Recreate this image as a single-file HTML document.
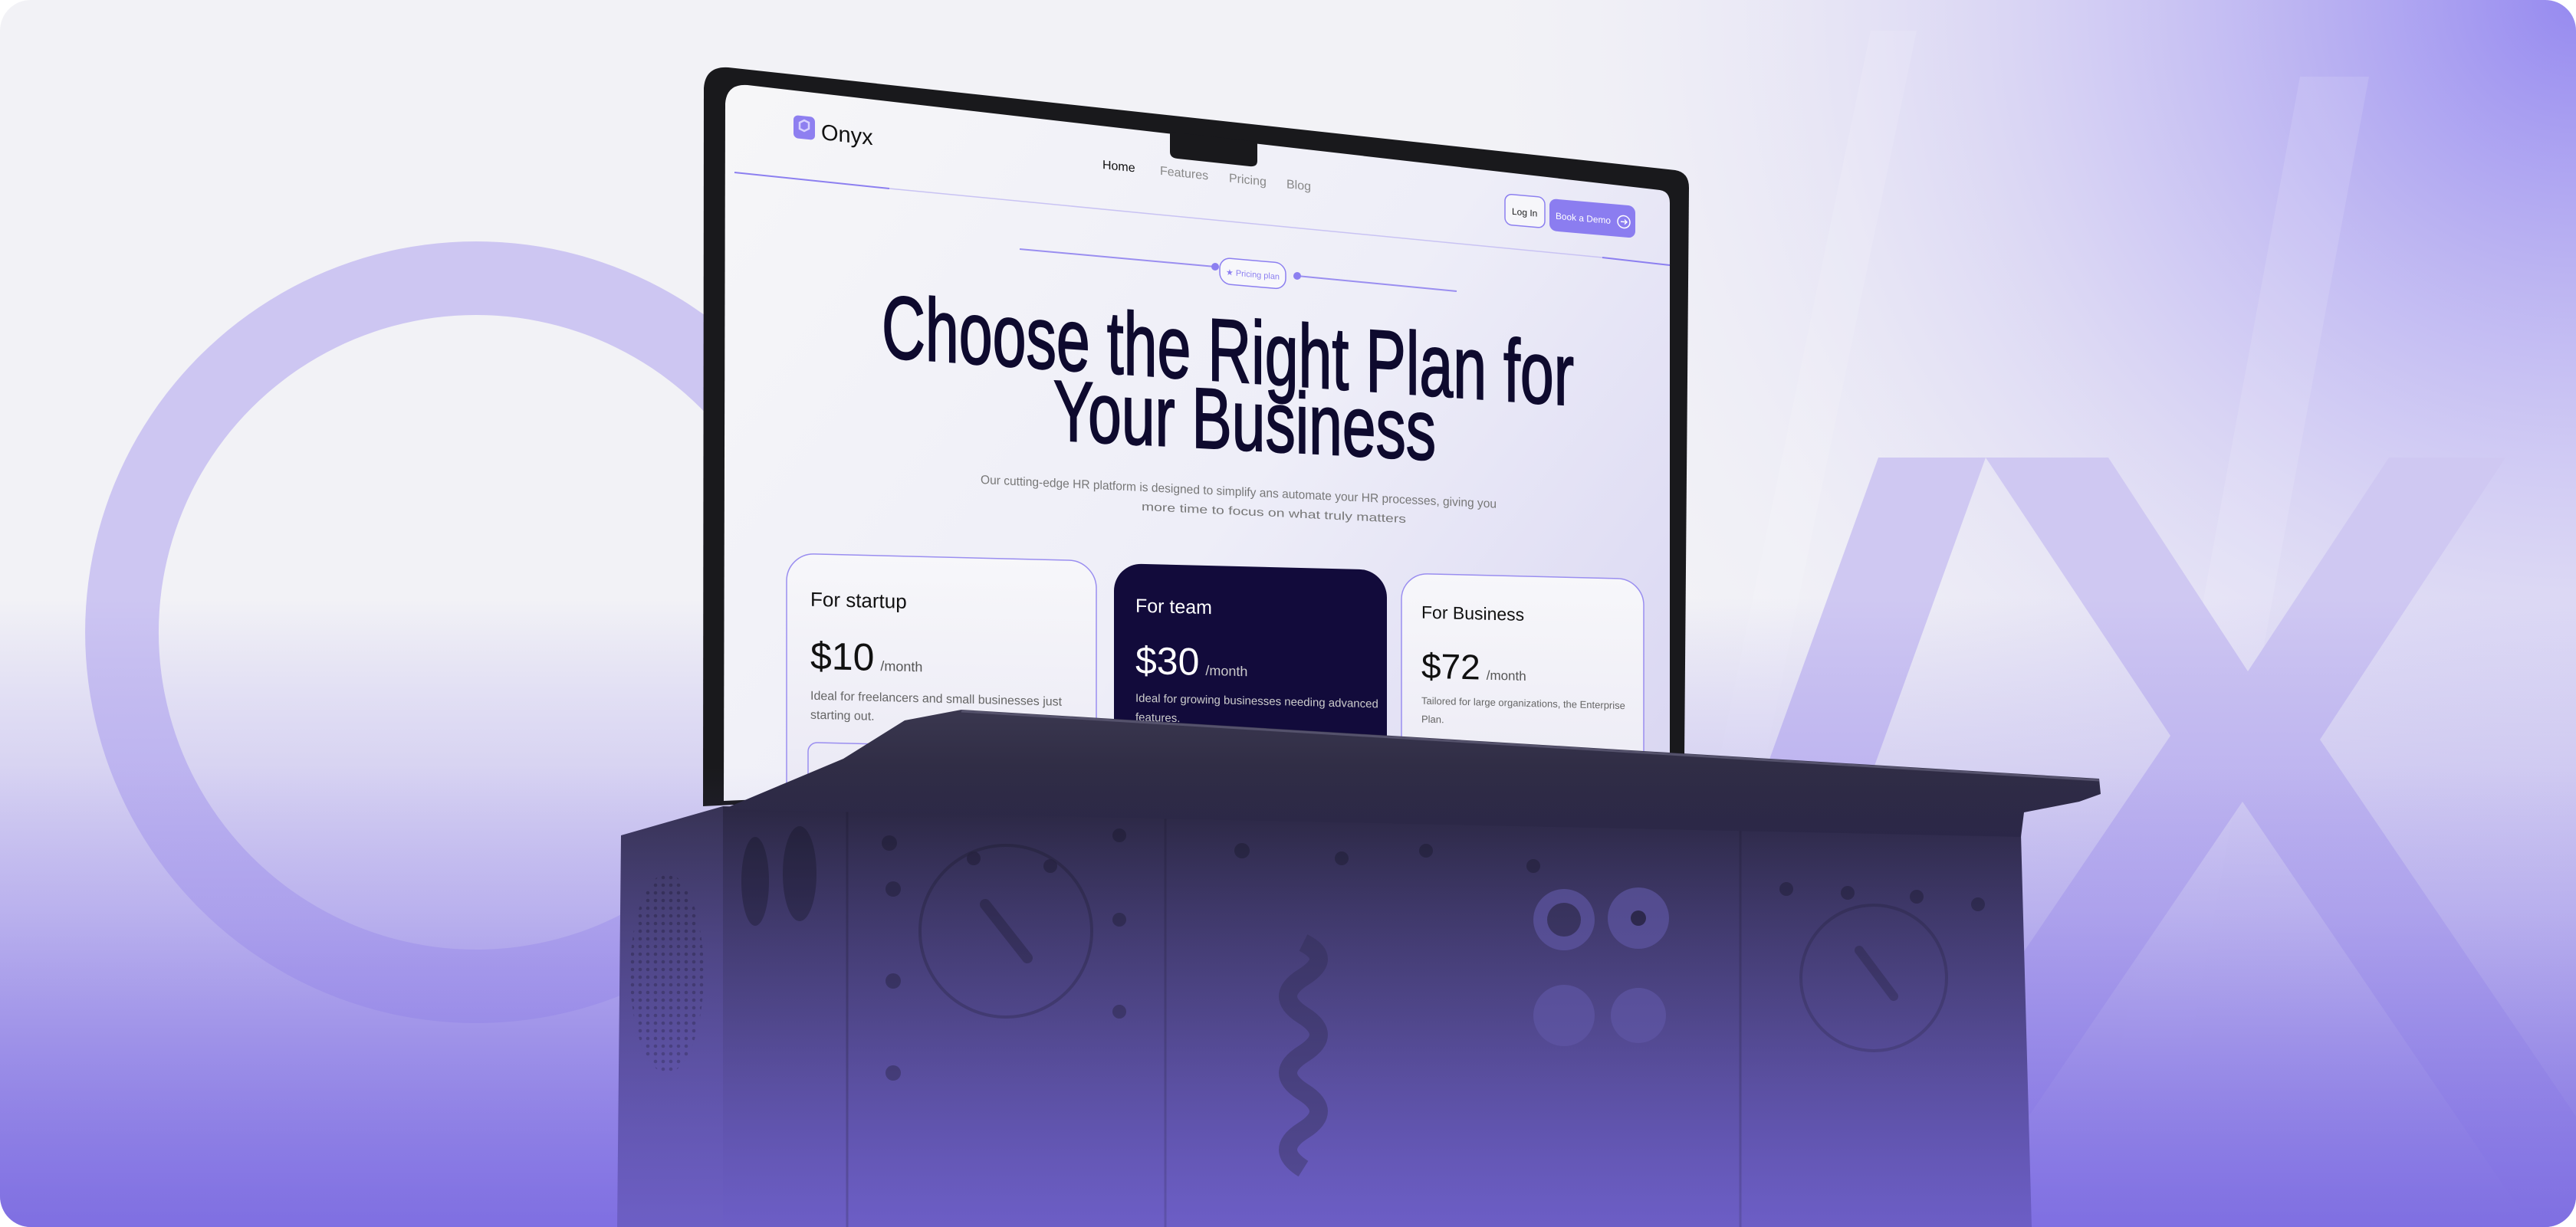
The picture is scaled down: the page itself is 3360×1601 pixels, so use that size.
<!DOCTYPE html>
<html><head><meta charset="utf-8"><style>
html,body{margin:0;padding:0;background:#fff;width:3360px;height:1601px;overflow:hidden}
svg{display:block}
text{font-family:"Liberation Sans",sans-serif}
</style></head><body>
<svg width="3360" height="1601" viewBox="0 0 3360 1601" xmlns="http://www.w3.org/2000/svg">
<defs>
<clipPath id="pg"><rect x="0" y="0" width="3360" height="1601" rx="40"/></clipPath>
<radialGradient id="tr" cx="3360" cy="0" r="1500" gradientUnits="userSpaceOnUse">
<stop offset="0" stop-color="#968af0"/><stop offset="0.45" stop-color="#c9c2f3" stop-opacity="0.7"/><stop offset="1" stop-color="#f2f2f6" stop-opacity="0"/></radialGradient>
<linearGradient id="bot" x1="0" y1="780" x2="0" y2="1601" gradientUnits="userSpaceOnUse">
<stop offset="0" stop-color="#8a7be6" stop-opacity="0"/><stop offset="0.5" stop-color="#a497ec" stop-opacity="0.55"/><stop offset="1" stop-color="#8474e4" stop-opacity="1"/></linearGradient>
<linearGradient id="bot2" x1="0" y1="1000" x2="0" y2="1601" gradientUnits="userSpaceOnUse">
<stop offset="0" stop-color="#7b6be0" stop-opacity="0"/><stop offset="1" stop-color="#7b6be0" stop-opacity="0.55"/></linearGradient>
<linearGradient id="scr" x1="958" y1="112" x2="2178" y2="1040" gradientUnits="userSpaceOnUse">
<stop offset="0" stop-color="#f6f6f8"/><stop offset="0.55" stop-color="#eeeef8"/><stop offset="1" stop-color="#d9d6f2"/></linearGradient>
<linearGradient id="card" x1="0" y1="0" x2="0" y2="1"><stop offset="0" stop-color="#f7f7fa"/><stop offset="1" stop-color="#e6e4f3"/></linearGradient>
<linearGradient id="box" x1="0" y1="1050" x2="0" y2="1601" gradientUnits="userSpaceOnUse">
<stop offset="0" stop-color="#27243b"/><stop offset="0.5" stop-color="#3d3766"/><stop offset="1" stop-color="#5a4ea6"/></linearGradient>
<linearGradient id="boxl" x1="0" y1="1050" x2="0" y2="1601" gradientUnits="userSpaceOnUse">
<stop offset="0" stop-color="#34304e"/><stop offset="1" stop-color="#5b50a4"/></linearGradient>
<linearGradient id="lid" x1="0" y1="926" x2="0" y2="1090" gradientUnits="userSpaceOnUse">
<stop offset="0" stop-color="#3a374f"/><stop offset="1" stop-color="#24213a"/></linearGradient>
<pattern id="dots" width="10" height="10" patternUnits="userSpaceOnUse"><circle cx="5" cy="5" r="2.3" fill="#1e1b30" opacity="0.6"/></pattern>
</defs>
<g clip-path="url(#pg)">
<rect width="3360" height="1601" fill="#f2f2f6"/>
<rect width="3360" height="1601" fill="url(#tr)"/>
<polygon points="2440,40 2500,40 2280,1100 2220,1100" fill="#ffffff" opacity="0.12"/>
<polygon points="3000,100 3090,100 2850,1400 2760,1400" fill="#ffffff" opacity="0.12"/>
<!-- O ring -->
<path d="M621,315 a510,510 0 1,0 0.1,0 Z M621,411 a414,414 0 1,1 -0.1,0 Z" fill="#cdc6f2" fill-rule="evenodd"/>
<polygon points="2450,597 2590,597 2228,1601 2088,1601" fill="#cfc8f2"/>
<polygon points="2590,597 2750,597 2932,876 3116,597 3268,597 3026,965 3458,1601 3302,1601 2925,1046 2548,1601 2396,1601 2831,960" fill="#cfc8f2"/>
<rect width="3360" height="1601" fill="url(#bot)"/>

<!-- laptop bezel -->
<path d="M950,88 L2185,222 Q2203,225 2203,245 L2197,990 L917,1052 L918,115 Q920,86 950,88 Z" fill="#19191c"/>
<path d="M975,111 L2165,248 Q2178,250 2178,265 L2178,992 L944,1045 L946,135 Q948,109 975,111 Z" fill="url(#scr)"/>
<path d="M1526,172 L1640,185 L1640,210 Q1640,218 1630,217 L1536,207 Q1526,206 1526,198 Z" fill="#19191c"/>
<!-- logo -->
<rect x="1035" y="150" width="28" height="30" rx="6" fill="#8e7ff0" transform="skewY(6)" transform-origin="1035 150"/>
<path d="M1043,160 l6,-3 6,3 0,8 -6,3 -6,-3Z" fill="none" stroke="#d8d2ff" stroke-width="2.5"/>
<text x="1071" y="182" font-size="29" fill="#111" transform="skewY(6)" transform-origin="1071 182">Onyx</text>
<g font-size="16" transform="skewY(6)" transform-origin="1438 220">
<text x="1438" y="220" fill="#111">Home</text>
<text x="1513" y="220" fill="#888">Features</text>
<text x="1603" y="220" fill="#888">Pricing</text>
<text x="1678" y="220" fill="#888">Blog</text>
</g>
<line x1="958" y1="225" x2="1160" y2="246" stroke="#8c7ff0" stroke-width="2"/>
<line x1="1160" y1="246" x2="2090" y2="336" stroke="#c9c3f3" stroke-width="1.5"/>
<line x1="2090" y1="336" x2="2178" y2="346" stroke="#8c7ff0" stroke-width="2"/>
<g transform="skewY(5)" transform-origin="1963 253">
<rect x="1963" y="253" width="52" height="40" rx="9" fill="#f6f6fa" stroke="#8c7ff0" stroke-width="1.5"/>
<text x="1972" y="279" font-size="12" fill="#222">Log In</text>
</g>
<g transform="skewY(5)" transform-origin="2021 259">
<rect x="2021" y="259" width="112" height="42" rx="9" fill="#8b7df0"/>
<text x="2029" y="285" font-size="12" fill="#fff" textLength="72" lengthAdjust="spacingAndGlyphs">Book a Demo</text>
<circle cx="2118" cy="281" r="8" fill="none" stroke="#fff" stroke-width="1.5"/>
<path d="M2114,281 h8 m-3,-3 l3,3 -3,3" stroke="#fff" stroke-width="1.4" fill="none"/>
</g>
<line x1="1330" y1="325" x2="1585" y2="348" stroke="#9a8ef0" stroke-width="2"/>
<circle cx="1585" cy="348" r="5" fill="#8c7ff0"/>
<line x1="1692" y1="360" x2="1900" y2="380" stroke="#9a8ef0" stroke-width="2"/>
<circle cx="1692" cy="360" r="5" fill="#8c7ff0"/>
<g transform="skewY(5)" transform-origin="1591 336">
<rect x="1591" y="336" width="86" height="34" rx="14" fill="#f7f7fb" stroke="#8c7ff0" stroke-width="1.5"/>
<text x="1599" y="358" font-size="11" fill="#8c7ff0" textLength="70" lengthAdjust="spacingAndGlyphs">★ Pricing plan</text>
</g>
<text x="1150" y="466" font-size="116" fill="#0e0a2e" stroke="#0e0a2e" stroke-width="2" textLength="903" lengthAdjust="spacingAndGlyphs" transform="skewY(4)" transform-origin="1150 466">Choose the Right Plan for</text>
<text x="1374" y="574" font-size="112" fill="#0e0a2e" stroke="#0e0a2e" stroke-width="2" textLength="499" lengthAdjust="spacingAndGlyphs" transform="skewY(3)" transform-origin="1374 574">Your Business</text>
<g font-size="16" fill="#777" transform="skewY(2.7)" transform-origin="1279 631">
<text x="1279" y="631" textLength="673" lengthAdjust="spacingAndGlyphs">Our cutting-edge HR platform is designed to simplify ans automate your HR processes, giving you</text>
<text x="1489" y="656" font-size="15" textLength="345" lengthAdjust="spacingAndGlyphs">more time to focus on what truly matters</text>
</g>
<g transform="skewY(1.4)" transform-origin="1026 722">
<rect x="1026" y="722" width="404" height="420" rx="36" fill="url(#card)" stroke="#9a8ef0" stroke-width="1.5"/>
<text x="1057" y="790" font-size="26" fill="#111">For startup</text>
<text x="1057" y="872" font-size="50" fill="#111">$10<tspan font-size="18" fill="#555" dx="8">/month</tspan></text>
<text x="1057" y="912" font-size="16" fill="#666">Ideal for freelancers and small businesses just</text>
<text x="1057" y="937" font-size="16" fill="#666">starting out.</text>
<rect x="1054" y="968" width="340" height="60" rx="12" fill="none" stroke="#9a8ef0" stroke-width="1.5"/>
</g>
<g transform="skewY(1.4)" transform-origin="1453 735">
<rect x="1453" y="735" width="356" height="420" rx="36" fill="#120b3b"/>
<text x="1481" y="798" font-size="25" fill="#fff">For team</text>
<text x="1481" y="878" font-size="50" fill="#fff">$30<tspan font-size="18" fill="#ccc" dx="8">/month</tspan></text>
<text x="1481" y="915" font-size="15" fill="#ccc">Ideal for growing businesses needing advanced</text>
<text x="1481" y="940" font-size="15" fill="#ccc">features.</text>
</g>
<g transform="skewY(1.4)" transform-origin="1828 748">
<rect x="1828" y="748" width="316" height="420" rx="34" fill="url(#card)" stroke="#9a8ef0" stroke-width="1.5"/>
<text x="1854" y="806" font-size="23" fill="#111">For Business</text>
<text x="1854" y="884" font-size="46" fill="#111">$72<tspan font-size="17" fill="#555" dx="8">/month</tspan></text>
<text x="1854" y="918" font-size="13" fill="#666">Tailored for large organizations, the Enterprise</text>
<text x="1854" y="942" font-size="13" fill="#666">Plan.</text>
</g>

<!-- device box -->
<polygon points="810,1090 943,1052 943,1601 805,1601" fill="url(#boxl)"/>
<polygon points="943,1052 2636,1088 2650,1601 943,1601" fill="url(#box)"/>
<line x1="1105" y1="1058" x2="1105" y2="1601" stroke="#1f1c30" stroke-width="3" opacity="0.6"/>
<line x1="1520" y1="1066" x2="1520" y2="1601" stroke="#1f1c30" stroke-width="3" opacity="0.5"/>
<line x1="2270" y1="1080" x2="2270" y2="1601" stroke="#1f1c30" stroke-width="3" opacity="0.5"/>
<polygon points="1254,926 2738,1016 2740,1036 2712,1046 2640,1060 2636,1092 943,1056 1100,990 1180,940" fill="url(#lid)"/>
<line x1="1254" y1="928" x2="2738" y2="1018" stroke="#55526c" stroke-width="3"/>
<g fill="#1c1a2c" opacity="0.8">
<ellipse cx="985" cy="1150" rx="18" ry="58"/><ellipse cx="1043" cy="1140" rx="22" ry="62"/>
<circle cx="1160" cy="1100" r="10"/><circle cx="1165" cy="1160" r="10"/><circle cx="1165" cy="1280" r="10"/><circle cx="1165" cy="1400" r="10"/>
<circle cx="1270" cy="1120" r="9"/><circle cx="1370" cy="1130" r="9"/><circle cx="1460" cy="1090" r="9"/><circle cx="1460" cy="1200" r="9"/><circle cx="1460" cy="1320" r="9"/>
<circle cx="1620" cy="1110" r="10"/><circle cx="1750" cy="1120" r="9"/><circle cx="1860" cy="1110" r="9"/><circle cx="2000" cy="1130" r="9"/>
<circle cx="2330" cy="1160" r="9"/><circle cx="2410" cy="1165" r="9"/><circle cx="2500" cy="1170" r="9"/><circle cx="2580" cy="1180" r="9"/>
</g>
<circle cx="1312" cy="1215" r="112" fill="none" stroke="#1c1a2c" stroke-width="4" opacity="0.6"/>
<line x1="1285" y1="1180" x2="1340" y2="1250" stroke="#1c1a2c" stroke-width="14" stroke-linecap="round" opacity="0.7"/>
<circle cx="2444" cy="1276" r="95" fill="none" stroke="#1c1a2c" stroke-width="4" opacity="0.5"/>
<line x1="2425" y1="1240" x2="2470" y2="1300" stroke="#1c1a2c" stroke-width="12" stroke-linecap="round" opacity="0.6"/>
<circle cx="2040" cy="1200" r="40" fill="#4c4680"/><circle cx="2040" cy="1200" r="22" fill="#2a2742"/>
<circle cx="2137" cy="1198" r="40" fill="#4c4680"/><circle cx="2137" cy="1198" r="10" fill="#1c1a2c"/>
<circle cx="2040" cy="1325" r="40" fill="#4c4680"/><circle cx="2137" cy="1325" r="36" fill="#4c4680"/>
<path d="M1700,1230 q40,20 0,45 q-40,25 0,50 q40,25 0,50 q-40,25 0,50 q40,25 0,50 q-40,25 0,50" fill="none" stroke="#2a2745" stroke-width="24"/>
<ellipse cx="870" cy="1270" rx="48" ry="130" fill="url(#dots)"/>
<rect width="3360" height="1601" fill="url(#bot2)"/>
</g>
</svg>
</body></html>
